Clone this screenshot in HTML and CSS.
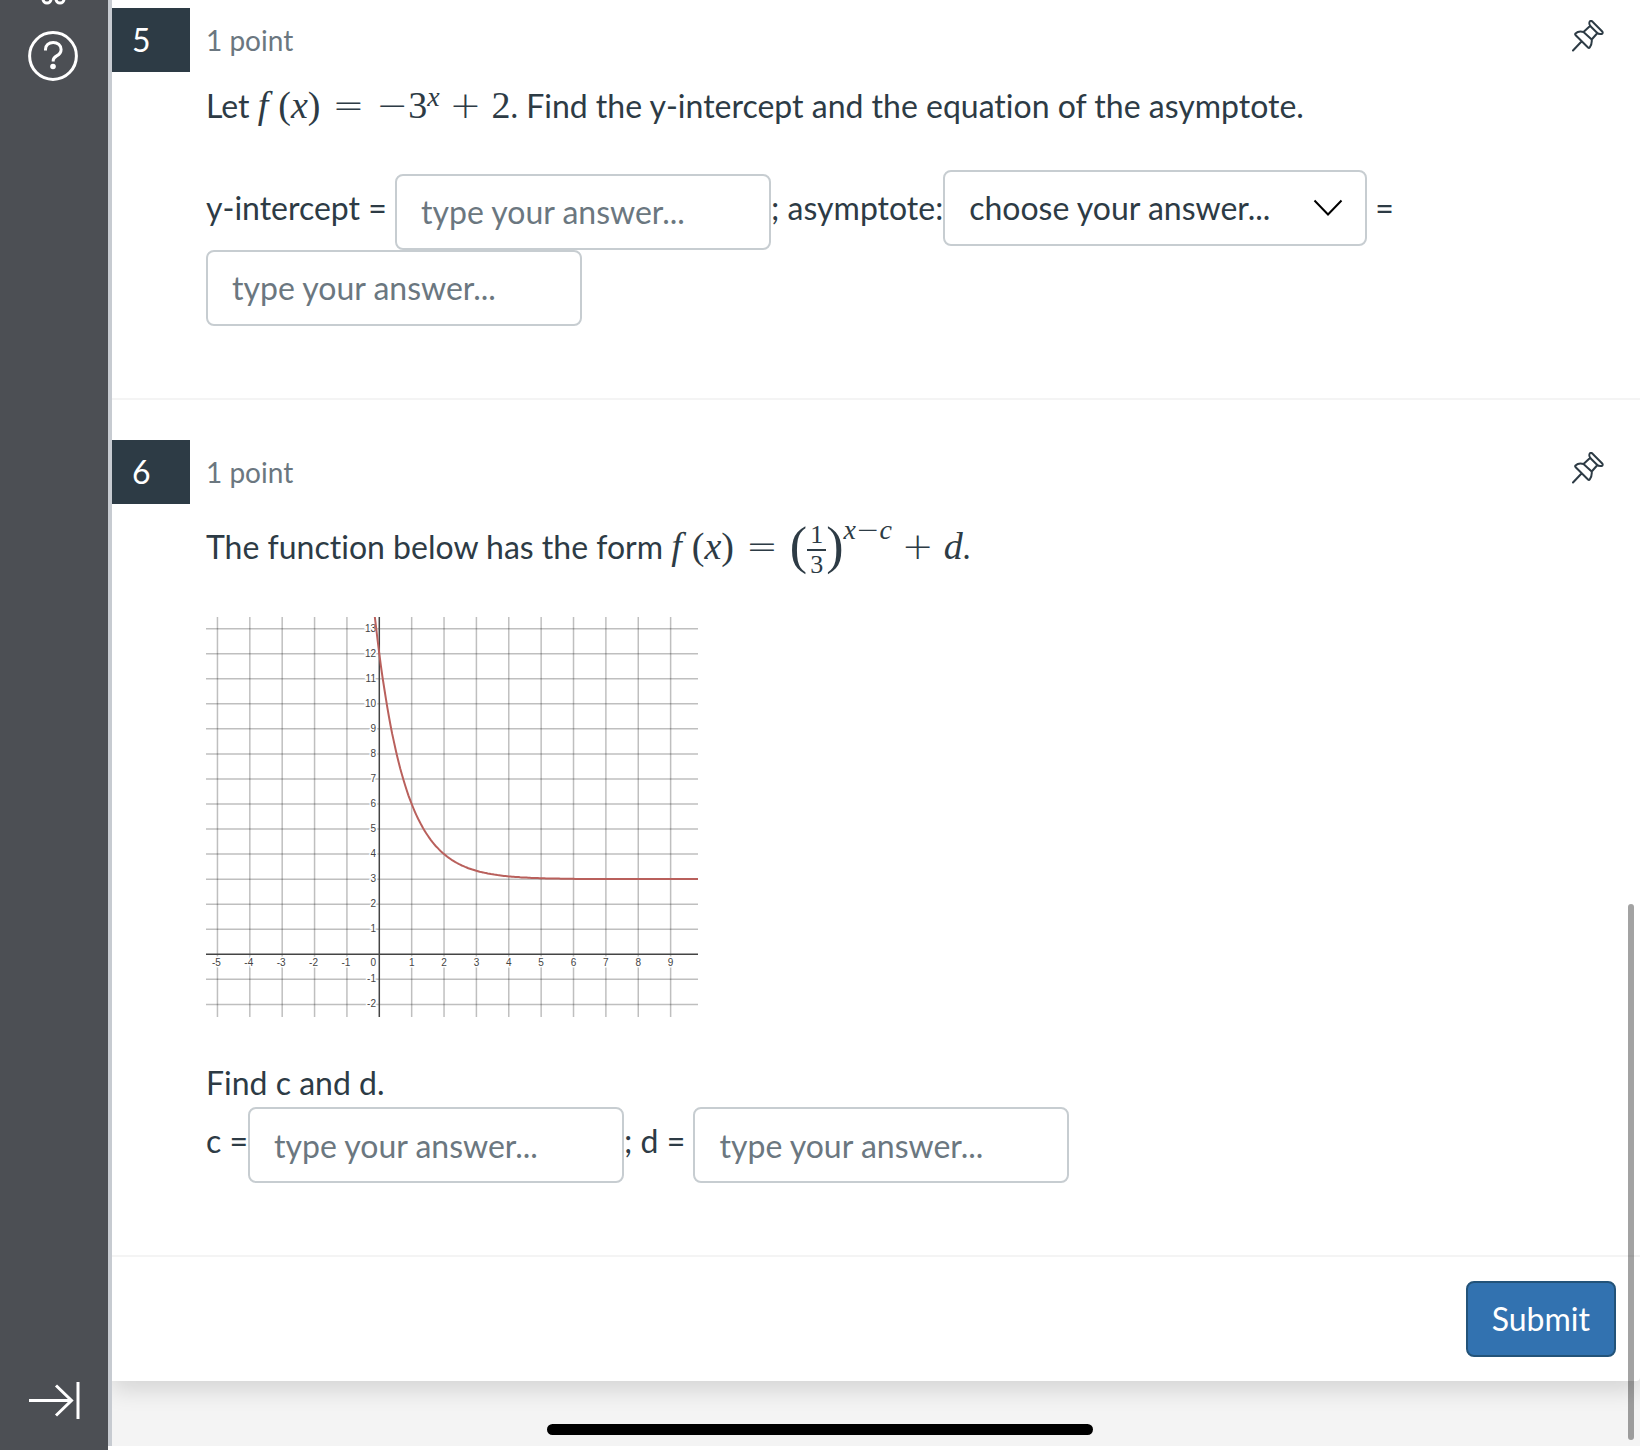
FILE: index.html
```html
<!DOCTYPE html>
<html lang="en">
  <head>
    <meta charset="UTF-8" />
    <meta name="viewport" content="width=device-width, initial-scale=1.0" />
    <title>Quiz</title>
    <link rel="stylesheet" href="styles.css">
  </head>
  <body>
    <nav class="sidebar">
      <div class="side-top">
        <svg class="side-cut" viewBox="0 0 28 5" aria-hidden="true">
          <circle cx="7" cy="-1" r="4" />
          <circle cx="20" cy="-1" r="4" />
        </svg>
        <a href="#" class="side-link" aria-label="Help">
          <svg width="50" height="50" viewBox="0 0 50 50">
            <circle cx="25" cy="25" r="23.4" />
            <path d="M17.5 19.500v-1.3c0-4 3.2-6.8 7.7-6.8s7.9 3 7.9 7c0 3.100-1.600 4.900-4.400 6.500-2.400 1.400-3.500 2.500-3.500 4.700v1" />
            <circle class="dot" cx="25" cy="35.500" r="2.800" />
          </svg>
        </a>
      </div>
      <a href="#" class="side-link" aria-label="Expand menu">
        <svg class="expand" width="54" height="40" viewBox="0 0 54 40">
          <path d="M1 20.500h43M28 5.500l15.500 15L28 35.500M50 2v37" />
        </svg>
      </a>
    </nav>

    <main class="page">
      <form class="card">
        <section class="question">
          <div class="head">
            <span class="number">5</span>
            <span class="points">1 point</span>
            <button type="button" class="pin" aria-label="Pin question 5">
              <svg width="32" height="40" viewBox="32 20 32 40">
                <path d="M50 21.200c1-.8 2.200-.2 3.300 1.300l8.700 8.700c1.200 1.200.7 2.500-.5 2.800-2 .4-3.500-.3-5-1.800l-5.500-5.500c-1.500-1.500-2.300-4-1-5.500zM50 26l-6.500 6M57 33.500l-5.300 6M43.500 32c-3-.8-6-.4-8 1.500-.6.600-.3 1.200.2 1.700l12.300 12.300c.6.600 1.300.6 1.700 0 1.600-2.500 2.400-5 2-8zM43.500 32l8.200 7.500M41.500 41.500L33 50.500" />
              </svg>
            </button>
          </div>
          <div class="body">
            <p>Let <span class="math"><i class="fn">f</i><b class="paren">(</b><i>x</i><b class="paren">)</b><span class="rel">=</span><span class="neg">−</span>3<sup><i>x</i></sup><span class="bin">+</span>2</span>. Find the y-intercept and the equation of the asymptote.</p>
            <p>
              <label for="yint">y-intercept =</label>
              <input type="text" id="yint" placeholder="type your answer..." /><label for="asym">; asymptote:</label><span class="select"><select id="asym">
                  <option>choose your answer...</option>
                  <option>x</option>
                  <option>y</option>
                </select><svg width="30" height="18" viewBox="0 0 30 18" aria-hidden="true"><path d="M1.500 1.500L15 15.500 28.500 1.500" /></svg></span>
              <label for="asymval">=</label>
              <input type="text" id="asymval" placeholder="type your answer..." />
            </p>
          </div>
        </section>

        <section class="question">
          <div class="head">
            <span class="number">6</span>
            <span class="points">1 point</span>
            <button type="button" class="pin" aria-label="Pin question 6">
              <svg width="32" height="40" viewBox="32 20 32 40">
                <path d="M50 21.200c1-.8 2.200-.2 3.300 1.300l8.700 8.700c1.200 1.200.7 2.500-.5 2.800-2 .4-3.500-.3-5-1.800l-5.500-5.500c-1.500-1.500-2.300-4-1-5.500zM50 26l-6.500 6M57 33.500l-5.300 6M43.500 32c-3-.8-6-.4-8 1.500-.6.600-.3 1.200.2 1.700l12.300 12.300c.6.600 1.300.6 1.700 0 1.600-2.500 2.400-5 2-8zM43.500 32l8.200 7.500M41.500 41.500L33 50.500" />
              </svg>
            </button>
          </div>
          <div class="body">
            <p class="tall">The function below has the form <span class="math"><i class="fn">f</i><b class="paren">(</b><i>x</i><b class="paren">)</b><span class="rel">=</span><b class="paren big">(</b><span class="frac"><span>1</span><span>3</span></span><b class="paren big">)</b><sup class="high"><i>x</i><span class="minus">−</span><i>c</i></sup><span class="bin">+</span><i>d</i></span>.</p>
            <svg id="graph" class="graph" width="492" height="400" viewBox="0 0 492 400" role="img" aria-label="Graph of the function"></svg>
            <p>
              Find c and d.<br />
              <label for="c">c =</label><input type="text" id="c" placeholder="type your answer..." /><label for="d">; d =</label>
              <input type="text" id="d" placeholder="type your answer..." />
            </p>
          </div>
        </section>

        <div class="foot">
          <button type="submit" class="submit">Submit</button>
        </div>
      </form>
    </main>
    <div class="scroll"></div>
    <div class="home"></div>
    <script src="script.js"></script>
  </body>
</html>
```
FILE: styles.css
```css
* {
  margin: 0;
  padding: 0;
  box-sizing: border-box;
}
body {
  display: flex;
  min-height: 100vh;
  background: #fff;
  color: #2d3b45;
  font-family: Lato, sans-serif;
  font-size: 32px;
  line-height: 48px;
  font-variant-ligatures: none;
}

/* left menu */
.sidebar {
  width: 108px;
  flex-shrink: 0;
  display: flex;
  flex-direction: column;
  justify-content: space-between;
  padding-bottom: 30px;
  background: #4c4f54;
}
.side-top {
  display: flex;
  flex-direction: column;
  gap: 26px;
}
.side-cut {
  width: 28px;
  height: 5px;
  margin-left: 40px;
  fill: none;
  stroke: #fff;
  stroke-width: 3;
}
.side-link {
  display: block;
  margin-left: 28px;
  line-height: 0;
}
.side-link svg {
  fill: none;
  stroke: #fff;
  stroke-width: 3;
}
.side-link .dot {
  fill: #fff;
  stroke: none;
}

/* quiz */
.page {
  flex: 1;
  margin-bottom: 4px;
  border-left: 4px solid #c7cbd1;
  background: #f4f4f4;
}
.card {
  background: #fff;
  border-bottom-right-radius: 4px;
  box-shadow: 0 8px 24px rgba(0, 0, 0, 0.14);
  clip-path: inset(0 0 -60px 0);
}
.question {
  padding: 40px 0 72px;
  border-bottom: 2px solid #f4f4f4;
}
.question:first-child {
  padding-top: 8px;
}
.head {
  display: flex;
  align-items: center;
  height: 64px;
  padding-right: 36px;
}
.number {
  width: 78px;
  line-height: 64px;
  padding-left: 20px;
  background: #2d3b45;
  color: #fff;
}
.points {
  flex: 1;
  padding-left: 16px;
  font-size: 28px;
  color: #6b7780;
}
.pin {
  background: none;
  border: none;
  line-height: 0;
  cursor: pointer;
}
.pin svg {
  fill: none;
  stroke: #2d3b45;
  stroke-width: 2;
  stroke-linecap: round;
  stroke-linejoin: round;
}
.body {
  padding: 10px 94px 0;
}
.body p + p {
  margin-top: 40px;
}
.body .tall {
  padding-top: 6px;
}
input,
select {
  height: 76px;
  padding: 0 24px;
  border: 2px solid #c7cdd1;
  border-radius: 8px;
  background: #fff;
  color: #2d3b45;
  font: inherit;
}
input {
  width: 376px;
  vertical-align: middle;
}
input::placeholder {
  color: #6b7780;
}
.select {
  position: relative;
}
select {
  width: 424px;
  appearance: none;
}
.select svg {
  position: absolute;
  right: 24px;
  top: 11px;
  fill: none;
  stroke: #000;
  stroke-width: 2;
  pointer-events: none;
}

/* formulas */
.math {
  font-family: "Liberation Serif", serif;
  font-size: 38px;
  line-height: 1;
  white-space: nowrap;
}
.math .fn {
  padding-right: 10px;
}
.math .paren {
  font-weight: normal;
}
.math sup {
  font-size: 28px;
  line-height: 0;
  vertical-align: 12px;
}
.math .high {
  vertical-align: 20px;
}
.rel,
.bin,
.neg,
.minus {
  font-family: "DejaVu Sans", sans-serif;
  font-weight: 200;
}
.rel {
  margin: 0 12px;
}
.bin {
  margin: 0 10px;
}
.math .big {
  font-size: 52px;
  vertical-align: -4px;
}
.frac {
  display: inline-flex;
  flex-direction: column;
  vertical-align: middle;
  text-align: center;
  font-size: 26px;
  line-height: 28px;
}
.frac span:first-child {
  padding: 0 3px;
  border-bottom: 2px solid #2d3b45;
}
.graph {
  display: block;
  margin: 38px 0 42px;
}
.grid {
  stroke: #000;
  stroke-opacity: 0.25;
  stroke-width: 1.5;
}
.axis {
  stroke: #444;
  stroke-width: 1.5;
}
.curve {
  fill: none;
  stroke: #b9605c;
  stroke-width: 2;
}
.graph text {
  font-family: "Liberation Sans", sans-serif;
  font-size: 10px;
  fill: #444;
  stroke: #fff;
  stroke-width: 3;
  paint-order: stroke;
}

.foot {
  display: flex;
  justify-content: flex-end;
  padding: 24px;
}
.submit {
  height: 76px;
  padding: 0 24px;
  border: 2px solid #235379;
  border-radius: 8px;
  background: #3272b0;
  color: #fff;
  font: inherit;
  cursor: pointer;
}

/* overlays of the tablet */
.scroll {
  position: fixed;
  right: 6px;
  bottom: 10px;
  width: 6px;
  height: 37vh;
  border-radius: 3px;
  background: rgba(0, 0, 0, 0.36);
}
.home {
  position: fixed;
  left: 50%;
  bottom: 15px;
  width: 546px;
  height: 11px;
  margin-left: -273px;
  border-radius: 6px;
  background: #000;
}
```
FILE: script.js
```js
const graph = document.querySelector("#graph");

// origin and size of one unit
const ox = 173.3;
const oy = 337.3;
const ux = 32.37;
const uy = 25.05;

let lines = "";
let labels = "";

for (let x = -5; x <= 9; x++) {
  let px = ox + x * ux;
  if (x != 0) {
    lines += `<line class="grid" x1="${px}" y1="0" x2="${px}" y2="400" />`;
    labels += `<text x="${px - (x < 0 ? 1 : 0)}" y="349" text-anchor="middle">${x}</text>`;
  }
}
for (let y = -2; y <= 13; y++) {
  let py = oy - y * uy;
  if (y != 0) {
    lines += `<line class="grid" x1="0" y1="${py}" x2="492" y2="${py}" />`;
    labels += `<text x="170" y="${py + 3}" text-anchor="end">${y}</text>`;
  }
}
labels += `<text x="170" y="349" text-anchor="end">0</text>`;

lines += `<line class="axis" x1="0" y1="${oy}" x2="492" y2="${oy}" />`;
lines += `<line class="axis" x1="${ox}" y1="0" x2="${ox}" y2="400" />`;

// y = (1/3)^(x-2) + 3
let points = [];
for (let x = -0.2; x <= 9.9; x += 0.05) {
  let y = Math.pow(1 / 3, x - 2) + 3;
  points.push((ox + x * ux).toFixed(1) + "," + (oy - y * uy).toFixed(1));
}

graph.innerHTML = lines + labels + `<polyline class="curve" points="${points.join(" ")}" />`;

document.querySelector("form").addEventListener("submit", (event) => {
  event.preventDefault();
});
```
